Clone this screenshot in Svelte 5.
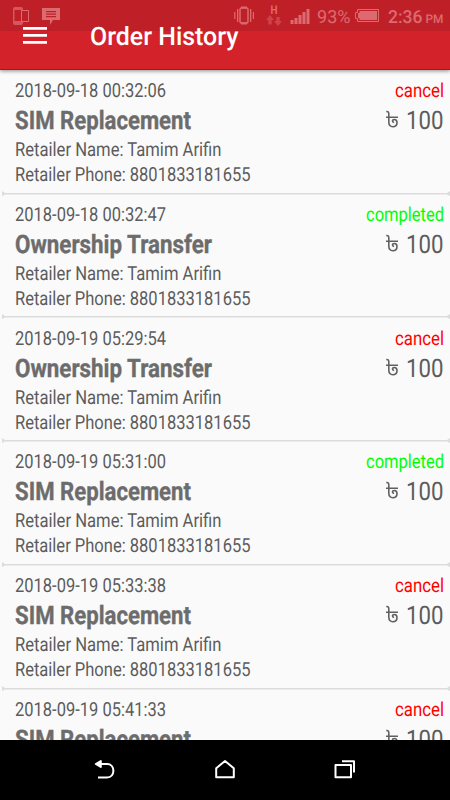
<script>
  const orders = [
    { date: '2018-09-18 00:32:06', status: 'cancel', title: 'SIM Replacement' },
    { date: '2018-09-18 00:32:47', status: 'completed', title: 'Ownership Transfer' },
    { date: '2018-09-19 05:29:54', status: 'cancel', title: 'Ownership Transfer' },
    { date: '2018-09-19 05:31:00', status: 'completed', title: 'SIM Replacement' },
    { date: '2018-09-19 05:33:38', status: 'cancel', title: 'SIM Replacement' },
    { date: '2018-09-19 05:41:33', status: 'cancel', title: 'SIM Replacement' }
  ];
  const titleWidth = { 'SIM Replacement': 176, 'Ownership Transfer': 197 };
  const statusWidth = { cancel: 49, completed: 78 };
</script>

{#snippet line(text, width, height, base, cls)}
  <svg class={cls} {width} {height}>
    <text x="0" y={base} textLength={width} lengthAdjust="spacingAndGlyphs">{text}</text>
  </svg>
{/snippet}

<div class="screen">
  <header>
    <div class="status-bar">
      <svg width="450" height="31" fill="#dc6b70">
        <path fill-rule="evenodd" d="M15 7h6q2 0 2 2v14q0 2-2 2h-6q-2 0-2-2V9q0-2 2-2zm-.5 3v11h7V10z" opacity=".75" />
        <path fill="#bf2028" stroke="#dc6b70" d="M21.500 10.500h7v11h-7z" />
        <path fill-rule="evenodd" d="M42 8h18v12h-7l-3 5v-5h-8zm4 3v1.200h10V11zm0 2.500v1.200h10v-1.200zm0 2.500v1.200h10V16z" />
        <rect x="240" y="8" width="8" height="15" rx="1.500" fill="none" stroke="#dc6b70" stroke-width="1.500" />
        <path d="M241 6.500h6v2h-6zM241 22.500h6v2h-6zM237 9h1.300v13H237zM250 9h1.300v13H250zM234.200 12h1.200v7h-1.200zM252.800 12h1.200v7h-1.200z" />
        <path fill="#cc4449" d="M270 15l4 5h-2.300v4.500h-3.400V20H266zM278 26l-4-5h2.300v-4h3.400v4h2.300z" />
        <path d="M290.500 20h3v4h-3zM294.500 18h3v6h-3zM298.500 15h3v9h-3zM302.500 12h3v12h-3zM306.500 9h3v15h-3z" />
        <path fill="none" stroke="#dc6b70" d="M357.500 9.500h21v12h-21v-3h-2v-6h2z" />
        <path d="M359.500 11h17.500v9h-17.500v-2h-1.500v-5h1.500z" />
        <text class="network" x="270.500" y="13.700" textLength="7" lengthAdjust="spacingAndGlyphs">H</text>
        <text x="317" y="22.700" font-size="18" textLength="33.500" lengthAdjust="spacingAndGlyphs">93%</text>
        <text x="388" y="22.700" font-size="18" font-weight="500" textLength="34.500" lengthAdjust="spacingAndGlyphs">2:36</text>
        <text x="425.500" y="22.700" font-size="12" font-weight="500" textLength="18" lengthAdjust="spacingAndGlyphs">PM</text>
      </svg>
    </div>
    <div class="toolbar">
      <svg class="menu" width="24" height="17" fill="#fff">
        <path d="M0 0h24v2.700H0zM0 7h24v2.700H0zM0 14h24v2.700H0z" />
      </svg>
      {@render line('Order History', 148.5, 34, 24.800, 'heading')}
    </div>
  </header>

  <main>
    {#each orders as order}
      <article>
        <div class="row">
          {@render line(order.date, 151, 29, 26.600, 'normal')}
          {@render line(order.status, statusWidth[order.status], 29, 26.600, order.status)}
        </div>
        <div class="row">
          {@render line(order.title, titleWidth[order.title], 33, 29.600, 'title')}
          <div class="amount">
            <svg class="taka" width="12" height="33" viewBox="0 0 12 33" role="img" aria-label="taka">
              <path d="M.3 12.600q2.400-.4 2.500 2.200v8.500q.2 4.400 4 4.400 4.200 0 4.200-3.900 0-3.300-2.500-3.300-2 0-2 1.600 0 1.300 1.600 1.300M0 18.300h12" />
            </svg>
            {@render line('100', 37.5, 33, 29.600, 'price')}
          </div>
        </div>
        {@render line('Retailer Name: Tamim Arifin', 206.5, 26, 23.500, 'normal')}
        {@render line('Retailer Phone: 8801833181655', 235.5, 26, 23, 'normal')}
        <svg class="divider" width="448" height="7">
          <path fill="#dcdcdc" d="M0 1l3 2h442l3-2v5l-3-1.500H3L0 6z" />
        </svg>
      </article>
    {/each}
  </main>

  <nav>
    <svg width="24" height="24"><path fill="#fff" d="M2.800 6l5-3v6z" /><path d="M5 6h8.500c8.500 0 8.500 13.500 0 13.500H4.500" transform="translate(.5 0)" /></svg>
    <svg width="24" height="24"><path d="M3.200 19.300V10.200L12 3l8.800 7.200v9.100z" /></svg>
    <svg width="24" height="24"><path d="M2.500 7h15.500v12.200h-15.500zM9 3.200h12V14.500" /></svg>
  </nav>
</div>

<style>
  :global(body) { margin: 0; background: #fafafa; }
  .screen {
    width: 450px;
    height: 800px;
    overflow: hidden;
    display: flex;
    flex-direction: column;
    background: #fafafa;
    font-family: Roboto, sans-serif;
    text-rendering: geometricPrecision;
  }
  svg { display: block; flex: none; overflow: visible; }
  header {
    flex: none;
    height: 70px;
    box-sizing: border-box;
    background: #d3222a;
    border-bottom: 1px solid #c9080d;
    box-shadow: 0 1px 4px rgba(0, 0, 0, .45);
    z-index: 1;
  }
  .status-bar { height: 31px; background: #bf2028; }
  .status-bar text { fill: #dc6b70; }
  .network { font-size: 12px; font-weight: 700; }
  .toolbar { display: flex; margin-top: -11px; padding-left: 23px; }
  .menu { margin: 6.500px 43px 0 0; }
  .heading { font-size: 25.500px; font-weight: 500; fill: #fff; }
  main { flex: 1; min-height: 0; overflow: hidden; }
  article { height: 123.750px; padding-left: 15px; box-sizing: border-box; }
  .row { display: flex; justify-content: space-between; padding-right: 6.500px; }
  .normal, .cancel, .completed { font-size: 19.400px; fill: #5c5c5c; }
  .cancel { fill: #f00; }
  .completed { fill: #0f0; }
  .title { font-size: 25.500px; font-weight: 700; fill: #6c6c6c; stroke: #6c6c6c; stroke-width: .35; }
  .amount { display: flex; gap: 8px; }
  .price { font-size: 25.500px; fill: #5c5c5c; }
  .taka path { fill: none; stroke: #616161; stroke-width: 1.600; }
  .divider { margin: 5.500px 0 0 -13px; }
  nav {
    flex: none;
    height: 60px;
    background: #000;
    display: flex;
    align-items: center;
    justify-content: center;
    gap: 96px;
  }
  nav path { stroke: #fff; stroke-width: 2; stroke-linejoin: round; }
  nav path:not([fill]) { fill: none; }
</style>
